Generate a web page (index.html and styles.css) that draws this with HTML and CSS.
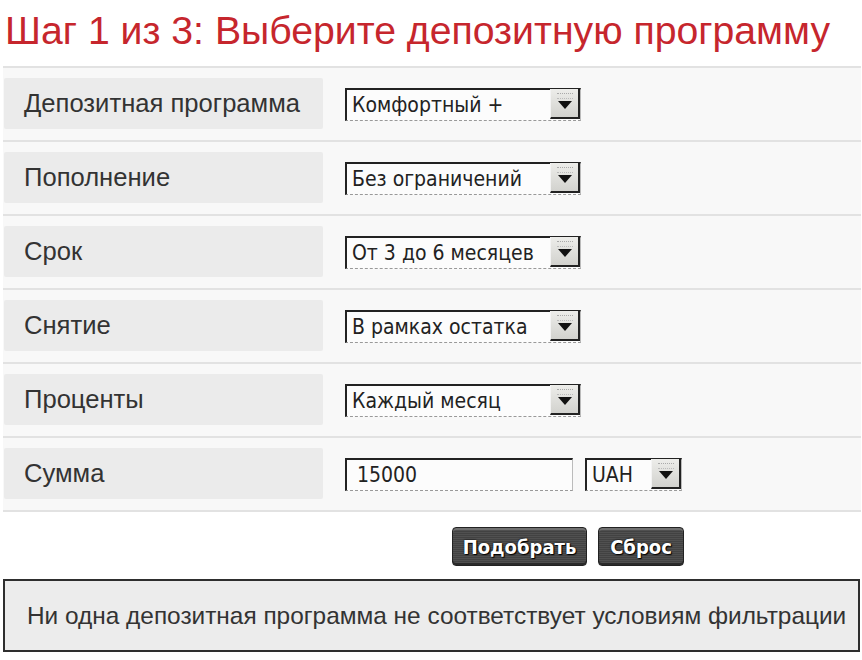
FILE: index.html
```html
<!DOCTYPE html>
<html lang="ru">
<head>
<meta charset="utf-8">
<title>Шаг 1 из 3</title>
<link rel="stylesheet" href="styles.css">
</head>
<body>
<div class="page">
  <h1 class="title">Шаг 1 из 3: Выберите депозитную программу</h1>
  <div class="form">
    <div class="row">
      <div class="label">Депозитная программа</div>
      <div class="field"><div class="select w236"><span class="val">Комфортный +</span><span class="arrow"></span></div></div>
    </div>
    <div class="row">
      <div class="label">Пополнение</div>
      <div class="field"><div class="select w236"><span class="val">Без ограничений</span><span class="arrow"></span></div></div>
    </div>
    <div class="row">
      <div class="label">Срок</div>
      <div class="field"><div class="select w236"><span class="val">От 3 до 6 месяцев</span><span class="arrow"></span></div></div>
    </div>
    <div class="row">
      <div class="label">Снятие</div>
      <div class="field"><div class="select w236"><span class="val">В рамках остатка</span><span class="arrow"></span></div></div>
    </div>
    <div class="row">
      <div class="label">Проценты</div>
      <div class="field"><div class="select w236"><span class="val">Каждый месяц</span><span class="arrow"></span></div></div>
    </div>
    <div class="row">
      <div class="label">Сумма</div>
      <div class="field">
        <div class="input"><span class="val">15000</span></div>
        <div class="select w96"><span class="val">UAH</span><span class="arrow"></span></div>
      </div>
    </div>
    <div class="actions">
      <button class="btn btn-find">Подобрать</button>
      <button class="btn btn-reset">Сброс</button>
    </div>
  </div>
  <div class="message">Ни одна депозитная программа не соответствует условиям фильтрации</div>
</div>
</body>
</html>
```
FILE: styles.css
```css
html, body {
  margin: 0;
  padding: 0;
  background: #ffffff;
}
.page {
  width: 858px;
  padding: 0 0 0 3px;
  font-family: "Liberation Sans", Arial, sans-serif;
}
.title {
  margin: 0;
  padding: 8px 0 0 2px;
  height: 66px;
  box-sizing: border-box;
  font-size: 39.2px;
  font-weight: normal;
  color: #c6262d;
  line-height: 46px;
  white-space: nowrap;
}
.form {
  background: #f8f8f8;
}
.row {
  display: flex;
  align-items: center;
  height: 72px;
  border-top: 2px solid #e2e2e2;
}
.label {
  width: 319px;
  height: 51px;
  margin: 0 0 2px 1px;
  box-sizing: border-box;
  padding-left: 20px;
  background: #ebebeb;
  border-radius: 2px;
  font-size: 25.6px;
  color: #333333;
  display: flex;
  align-items: center;
}
.field {
  display: flex;
  align-items: center;
  gap: 12px;
  margin-left: 22px;
}
.select, .input {
  height: 33px;
  box-sizing: border-box;
  background: #fcfcfc;
  border-top: 2px solid #222;
  border-left: 2px solid #222;
  border-right: 1px solid #bbb;
  border-bottom: 1px dashed #999;
  display: flex;
  align-items: center;
  font-family: "DejaVu Sans Condensed", "DejaVu Sans", sans-serif;
  font-size: 21px;
  color: #222;
}
.w236 { width: 236px; }
.w96 { width: 97px; }
.input { width: 228px; }
.val {
  padding-left: 5px;
  flex: 1;
  white-space: nowrap;
  overflow: hidden;
}
.input .val { padding-left: 10px; }
.arrow {
  width: 30px;
  height: 30px;
  margin-top: -1px;
  box-sizing: border-box;
  background: linear-gradient(#ededea, #d2d2ce);
  border-right: 2px solid #222;
  border-bottom: 2px solid #222;
  border-left: 1px solid #f4f4f4;
  position: relative;
}
.arrow::before {
  content: "";
  position: absolute;
  left: 6px;
  top: 4px;
  width: 16px;
  height: 4px;
  border-top: 1px dotted #aaa;
  border-bottom: 1px dotted #bbb;
}
.arrow::after {
  content: "";
  position: absolute;
  left: 7px;
  top: 12px;
  border-left: 7px solid transparent;
  border-right: 7px solid transparent;
  border-top: 8px solid #111;
}
.actions {
  display: flex;
  justify-content: flex-end;
  gap: 11px;
  height: 69px;
  padding: 15px 177px 0 0;
  box-sizing: border-box;
  border-top: 2px solid #e2e2e2;
  background: #ffffff;
}
.btn {
  height: 39px;
  padding: 0 8px;
  border: 1px solid #222;
  border-radius: 4px;
  background: repeating-linear-gradient(0deg, #505050 0 1px, #424242 1px 2px);
  box-shadow: inset 0 2px 0 #707070, inset 0 -2px 0 #2a2a2a;
  color: #ffffff;
  font-family: "DejaVu Sans Condensed", "DejaVu Sans", sans-serif;
  font-size: 20px;
  font-weight: bold;
  text-shadow: 0 0 2px #000, 1px 1px 1px #000;
  cursor: pointer;
}
.btn-find { width: 135px; }
.btn-reset { width: 86px; }
.message {
  width: 857px;
  height: 73px;
  box-sizing: border-box;
  border: 2px solid #2e2e2e;
  background: #ececec;
  display: flex;
  align-items: center;
  padding-left: 22px;
  font-size: 24.4px;
  color: #333333;
  white-space: nowrap;
}
```
